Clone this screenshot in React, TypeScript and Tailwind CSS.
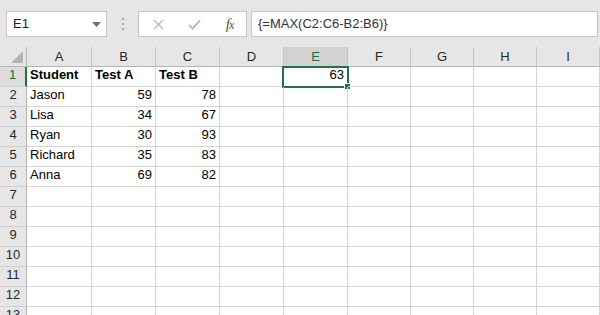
import React from "react";

const cols = ["A", "B", "C", "D", "E", "F", "G", "H", "I"];
const data: Record<number, (string | number)[]> = {
  1: ["Student", "Test A", "Test B", "", 63],
  2: ["Jason", 59, 78],
  3: ["Lisa", 34, 67],
  4: ["Ryan", 30, 93],
  5: ["Richard", 35, 83],
  6: ["Anna", 69, 82],
};

export default function App() {
  const rows = Array.from({ length: 13 }, (_, i) => i + 1);
  return (
    <div
      className="w-[600px] h-[315px] overflow-hidden bg-[#e6e6e6] text-[13px] text-black"
      style={{ fontFamily: '"Liberation Sans", Arial, sans-serif' }}
    >
      {/* toolbar */}
      <div className="h-[47px] flex items-start pt-[11px] pl-[6px]">
        <div className="w-[101px] h-[26px] bg-white border border-[#c6c6c6] flex items-center pl-[6px] pr-[5px] justify-between">
          <span className="text-[#222]">E1</span>
          <svg width="9" height="5" viewBox="0 0 9 5">
            <polygon points="0,0 9,0 4.5,5" fill="#707070" />
          </svg>
        </div>
        <div className="w-[31px] h-[26px] flex flex-col items-center justify-center gap-[3px]">
          <div className="w-[2px] h-[2px] bg-[#a8a8a8]" />
          <div className="w-[2px] h-[2px] bg-[#a8a8a8]" />
          <div className="w-[2px] h-[2px] bg-[#a8a8a8]" />
        </div>
        <div className="w-[109px] h-[26px] bg-white border border-[#c6c6c6] flex items-center">
          <div className="w-[37px] flex justify-center pl-[2px]">
            <svg width="11" height="11" viewBox="0 0 11 11">
              <path d="M1 1 L10 10 M10 1 L1 10" stroke="#b8b8b8" strokeWidth="1.4" />
            </svg>
          </div>
          <div className="w-[37px] flex justify-center">
            <svg width="13" height="11" viewBox="0 0 13 11">
              <path d="M1 6 L4.5 9.5 L12 1.5" stroke="#bcbcbc" strokeWidth="2" fill="none" />
            </svg>
          </div>
          <div className="w-[33px] flex justify-center">
            <span
              className="italic text-[15px] text-[#555] leading-none tracking-[-1px]"
              style={{ fontFamily: '"Liberation Serif", serif' }}
            >
              f<span className="text-[12px]">x</span>
            </span>
          </div>
        </div>
        <div className="ml-[4px] w-[347px] h-[26px] bg-white border border-[#c6c6c6] flex items-center pl-[6px] text-[#333]">
          {"{=MAX(C2:C6-B2:B6)}"}
        </div>
      </div>

      {/* grid */}
      <div className="relative grid grid-cols-[27px_65px_64px_64px_64px_64px_63px_63px_63px_63px_1px] auto-rows-[20px] bg-white">
        {/* header row */}
        <div className="bg-[#e6e6e6] border-r border-b border-[#b8b8b8] flex items-end justify-end pr-[3px] pb-[3px]">
          <svg width="12" height="12" viewBox="0 0 12 12">
            <polygon points="12,0 12,12 0,12" fill="#b4b4b4" />
          </svg>
        </div>
        {cols.map((c) => (
          <div
            key={c}
            className={`${
              c === "E" ? "bg-[#d2d2d2] text-[#1e6b40]" : "bg-[#e6e6e6] text-[#262626]"
            } border-r border-b border-r-[#c4c4c4] border-b-[#b4b4b4] flex items-center justify-center pt-[1px]`}
          >
            {c}
          </div>
        ))}
        <div className="bg-[#e6e6e6] border-b border-[#b4b4b4]" />

        {rows.map((r) => (
          <React.Fragment key={r}>
            <div
              className={`${
                r === 1
                  ? "bg-[#dcdcdc] border-r-2 border-r-[#217346] text-[#1e6b40]"
                  : "bg-[#e6e6e6] border-r border-r-[#b4b4b4] text-[#262626]"
              } border-b border-b-[#cfcfcf] flex items-end justify-center pb-[2px]`}
            >
              {r}
            </div>
            {cols.map((c, ci) => {
              const v = data[r]?.[ci];
              const isNum = typeof v === "number";
              return (
                <div
                  key={c}
                  className={`relative border-r border-b border-[#d4d4d4] flex items-end pb-[2px] ${
                    isNum ? "justify-end pr-[3px]" : "justify-start pl-[3px]"
                  } ${r === 1 && ci < 3 ? "font-bold" : ""} whitespace-nowrap`}
                >
                  {v !== undefined && v !== "" ? v : null}
                  {r === 1 && c === "E" && (
                    <>
                      <div className="absolute left-[-2px] top-[-1px] w-[67px] h-[22px] border-2 border-[#217346] pointer-events-none" />
                      <div className="absolute left-[60px] top-[16px] w-[7px] h-[7px] bg-[#217346] border border-white" />
                    </>
                  )}
                </div>
              );
            })}
            <div className="border-b border-[#d4d4d4]" />
          </React.Fragment>
        ))}
      </div>
    </div>
  );
}
